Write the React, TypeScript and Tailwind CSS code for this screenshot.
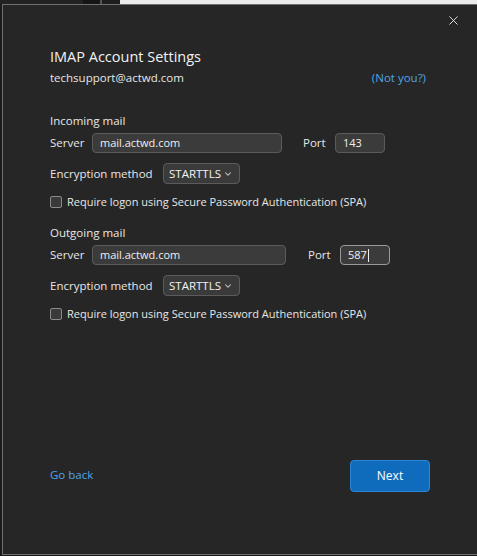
import { X, ChevronDown } from 'lucide-react';

const font = { fontFamily: '"Open Sans", "Noto Sans", sans-serif' };

function TextBox({ value, width, focused }: { value: string; width: string; focused?: boolean }) {
  return (
    <div
      className={`flex h-[20px] items-center rounded-[4px] border bg-[#3b3b3b] pl-[7px] text-[11px] text-[#f0f0f0] ${width} ${
        focused ? 'border-[#9a9a9a] border-[1.5px]' : 'border-[#5b5b5b]'
      }`}
    >
      {value}
      {focused && <span className="ml-px h-[13px] w-px bg-[#f0f0f0]" />}
    </div>
  );
}

function Encryption() {
  return (
    <div className="flex items-center">
      <span className="w-[113px]">Encryption method</span>
      <div className="flex h-[21px] w-[77px] items-center justify-between rounded-[4px] border border-[#5b5b5b] bg-[#3a3a3a] pl-[5px] pr-[6px] text-[11.5px] text-[#f4f4f4]">
        STARTTLS
        <ChevronDown size={10} strokeWidth={2.5} className="text-[#d0d0d0]" />
      </div>
    </div>
  );
}

function Spa() {
  return (
    <div className="flex h-[16px] items-center gap-[5px]">
      <div className="h-[12px] w-[12px] rounded-[2px] border border-[#8a8a8a] bg-[#3a3a3a]" />
      <span className="text-[11px]">Require logon using Secure Password Authentication (SPA)</span>
    </div>
  );
}

function Section({
  title,
  serverW,
  portGap,
  focused,
  port,
}: {
  title: string;
  serverW: string;
  portGap: string;
  focused?: boolean;
  port: string;
}) {
  return (
    <div className="flex flex-col">
      <div className="h-[18px] leading-[18px]">{title}</div>
      <div className="mt-[3px] flex items-center">
        <span className="w-[42px]">Server</span>
        <TextBox value="mail.actwd.com" width={serverW} />
        <span className={`${portGap} w-[32px]`}>Port</span>
        <TextBox value={port} width="w-[50px]" focused={focused} />
      </div>
      <div className="mt-[10px]">
        <Encryption />
      </div>
      <div className="mt-[10px]">
        <Spa />
      </div>
    </div>
  );
}

export default function App() {
  return (
    <div className="relative h-[556px] w-[477px] overflow-hidden bg-[#1b1b1b]" style={font}>
      {/* window behind the dialog */}
      <div className="flex h-[4px]">
        <div className="w-[83px] bg-[#222]" />
        <div className="w-[17px] bg-[#151515]" />
        <div className="w-[2px] bg-[#555]" />
        <div className="w-[18px] bg-[#1d1d1d]" />
        <div className="flex-1 bg-[#ececec]" />
      </div>
      <div className="ml-[2px] flex h-[551px] flex-col border-y border-l border-[#6f6f6f] bg-[#262626] pl-[47px] pr-[47px] text-[11.5px] leading-[16px] text-[#e6e6e6]">
        <div className="flex justify-end pt-[8px]">
          <X size={15} strokeWidth={1.5} className="mr-[-31px] text-[#e8e8e8]" />
        </div>
        <div className="mt-[18px] text-[14.5px] leading-[22px] text-[#f2f2f2]">IMAP Account Settings</div>
        <div className="mt-[2px] flex items-center justify-between">
          <span>techsupport@actwd.com</span>
          <span className="mr-[4px] text-[#4ea5e8]">(Not you?)</span>
        </div>
        <div className="mt-[26px]">
          <Section title="Incoming mail" serverW="w-[190px]" portGap="ml-[21px]" port="143" />
        </div>
        <div className="mt-[14px]">
          <Section title="Outgoing mail" serverW="w-[194px]" portGap="ml-[22px]" port="587" focused />
        </div>
        <div className="mt-auto mb-[62px] flex items-center justify-between">
          <span className="-mt-[2px] text-[#4ea5e8]">Go back</span>
          <button className="flex h-[32px] w-[80px] items-center justify-center rounded-[4px] border border-[#2f86d6] bg-[#0f6cbd] text-[12px] text-white">
            Next
          </button>
        </div>
      </div>
    </div>
  );
}
